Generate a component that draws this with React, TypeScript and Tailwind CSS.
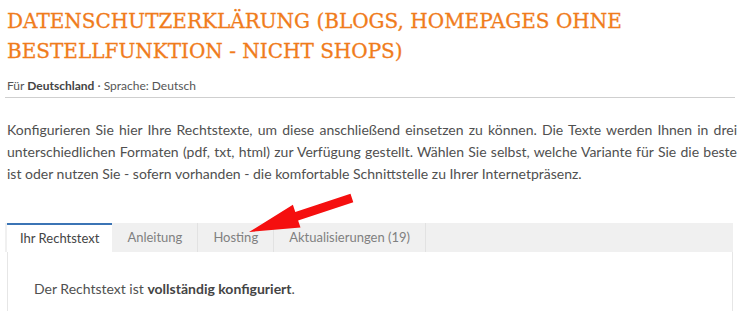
import React from 'react';

const TABS = ['Ihr Rechtstext', 'Anleitung', 'Hosting', 'Aktualisierungen (19)'];

const App: React.FC = () => {
  return (
    <div className="relative w-[747px] h-[311px] overflow-hidden bg-white font-['Lato',sans-serif] text-[#555]">
      <div className="px-[7px] pt-[6px] pr-[12px]">
        <h1 className="w-[680px] font-['DejaVu_Serif',serif] text-[20px] leading-[30px] text-[#f07c1c] [-webkit-text-stroke:0.3px_#f07c1c]">
          DATENSCHUTZERKLÄRUNG (BLOGS, HOMEPAGES OHNE BESTELLFUNKTION - NICHT SHOPS)
        </h1>
        <p className="mt-[12px] text-[12px] leading-[16px] text-[#555]">
          Für <b className="font-bold text-[#444]">Deutschland</b> · Sprache: Deutsch
        </p>
        <div className="mt-[3px] -ml-[2px] w-[730px] border-t border-[#cfcfcf]" />

        <p className="mt-[21px] w-[730px] text-justify text-[14px] leading-[22px] text-[#505050]">
          Konfigurieren Sie hier Ihre Rechtstexte, um diese anschließend einsetzen zu können. Die Texte werden Ihnen in drei
          unterschiedlichen Formaten (pdf, txt, html) zur Verfügung gestellt. Wählen Sie selbst, welche Variante für Sie die beste
          ist oder nutzen Sie - sofern vorhanden - die komfortable Schnittstelle zu Ihrer Internetpräsenz.
        </p>

        <div className="mt-[38px] -ml-[2px] w-[728px]">
          <div className="flex h-[29px] bg-[#f0f0f0] pl-[2px]">
            {TABS.map((tab, index) => (
              <div
                key={index}
                className={
                  index === 0
                    ? 'flex items-center px-[13px] bg-white border-t-2 border-[#3b74b5] text-[13px] text-[#444]'
                    : 'flex items-center px-[15px] border-r border-[#e2e2e2] text-[13px] text-[#808080]'
                }
              >
                {tab}
              </div>
            ))}
          </div>
          <div className="h-[60px] ml-[2px] border-x border-[#e6e6e6] px-[26px] pt-[26px] text-[14px] text-[#505050]">
            Der Rechtstext ist <b className="font-bold text-[#444]">vollständig konfiguriert</b>.
          </div>
        </div>
      </div>

      <svg className="absolute left-0 top-0 pointer-events-none" width="747" height="311" viewBox="0 0 747 311">
        <polygon
          points="249,232 300.5,227.6 298.1,220.5 353.3,202.3 350.5,193.7 295.3,211.9 292.9,204.8"
          fill="#f50f0f"
        />
      </svg>
    </div>
  );
};

export default App;
